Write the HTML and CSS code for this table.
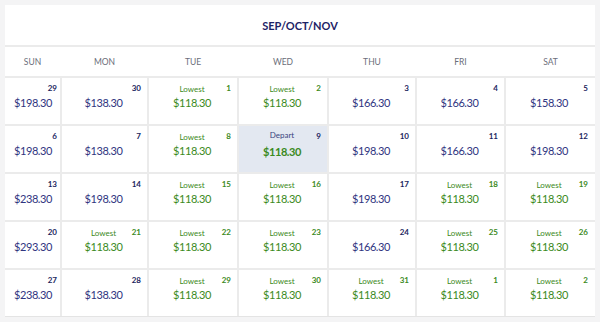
FILE: index.html
```html
<!DOCTYPE html>
<html>
<head>
<meta charset="utf-8">
<link rel="stylesheet" href="styles.css">
</head>
<body>
<div class="card">
  <div class="title">SEP/OCT/NOV</div>
  <div class="days">
    <div>SUN</div><div>MON</div><div>TUE</div><div>WED</div><div>THU</div><div>FRI</div><div>SAT</div>
  </div>
  <div class="cal">
    <div class="cell"><div class="top"><span class="d">29</span></div><div class="p">$198.30</div></div>
    <div class="cell"><div class="top"><span class="d">30</span></div><div class="p">$138.30</div></div>
    <div class="cell low"><div class="top"><span class="l">Lowest</span><span class="d">1</span></div><div class="p">$118.30</div></div>
    <div class="cell low"><div class="top"><span class="l">Lowest</span><span class="d">2</span></div><div class="p">$118.30</div></div>
    <div class="cell"><div class="top"><span class="d">3</span></div><div class="p">$166.30</div></div>
    <div class="cell"><div class="top"><span class="d">4</span></div><div class="p">$166.30</div></div>
    <div class="cell"><div class="top"><span class="d">5</span></div><div class="p">$158.30</div></div>

    <div class="cell"><div class="top"><span class="d">6</span></div><div class="p">$198.30</div></div>
    <div class="cell"><div class="top"><span class="d">7</span></div><div class="p">$138.30</div></div>
    <div class="cell low"><div class="top"><span class="l">Lowest</span><span class="d">8</span></div><div class="p">$118.30</div></div>
    <div class="cell sel"><div class="top"><span class="l">Depart</span><span class="d">9</span></div><div class="p">$118.30</div></div>
    <div class="cell"><div class="top"><span class="d">10</span></div><div class="p">$198.30</div></div>
    <div class="cell"><div class="top"><span class="d">11</span></div><div class="p">$166.30</div></div>
    <div class="cell"><div class="top"><span class="d">12</span></div><div class="p">$198.30</div></div>

    <div class="cell"><div class="top"><span class="d">13</span></div><div class="p">$238.30</div></div>
    <div class="cell"><div class="top"><span class="d">14</span></div><div class="p">$198.30</div></div>
    <div class="cell low"><div class="top"><span class="l">Lowest</span><span class="d">15</span></div><div class="p">$118.30</div></div>
    <div class="cell low"><div class="top"><span class="l">Lowest</span><span class="d">16</span></div><div class="p">$118.30</div></div>
    <div class="cell"><div class="top"><span class="d">17</span></div><div class="p">$198.30</div></div>
    <div class="cell low"><div class="top"><span class="l">Lowest</span><span class="d">18</span></div><div class="p">$118.30</div></div>
    <div class="cell low"><div class="top"><span class="l">Lowest</span><span class="d">19</span></div><div class="p">$118.30</div></div>

    <div class="cell"><div class="top"><span class="d">20</span></div><div class="p">$293.30</div></div>
    <div class="cell low"><div class="top"><span class="l">Lowest</span><span class="d">21</span></div><div class="p">$118.30</div></div>
    <div class="cell low"><div class="top"><span class="l">Lowest</span><span class="d">22</span></div><div class="p">$118.30</div></div>
    <div class="cell low"><div class="top"><span class="l">Lowest</span><span class="d">23</span></div><div class="p">$118.30</div></div>
    <div class="cell"><div class="top"><span class="d">24</span></div><div class="p">$166.30</div></div>
    <div class="cell low"><div class="top"><span class="l">Lowest</span><span class="d">25</span></div><div class="p">$118.30</div></div>
    <div class="cell low"><div class="top"><span class="l">Lowest</span><span class="d">26</span></div><div class="p">$118.30</div></div>

    <div class="cell"><div class="top"><span class="d">27</span></div><div class="p">$238.30</div></div>
    <div class="cell"><div class="top"><span class="d">28</span></div><div class="p">$138.30</div></div>
    <div class="cell low"><div class="top"><span class="l">Lowest</span><span class="d">29</span></div><div class="p">$118.30</div></div>
    <div class="cell low"><div class="top"><span class="l">Lowest</span><span class="d">30</span></div><div class="p">$118.30</div></div>
    <div class="cell low"><div class="top"><span class="l">Lowest</span><span class="d">31</span></div><div class="p">$118.30</div></div>
    <div class="cell low"><div class="top"><span class="l">Lowest</span><span class="d">1</span></div><div class="p">$118.30</div></div>
    <div class="cell low"><div class="top"><span class="l">Lowest</span><span class="d">2</span></div><div class="p">$118.30</div></div>
  </div>
</div>
</body>
</html>
```
FILE: styles.css
```css
html, body {
  margin: 0;
  padding: 0;
  background: #f4f4f5;
}
body {
  padding: 5px;
  font-family: "Lato", "Open Sans", sans-serif;
}
.card {
  width: 590px;
  background: #fff;
  box-sizing: border-box;
}
.title {
  height: 40px;
  border-bottom: 2px solid #ebebeb;
  display: flex;
  align-items: center;
  justify-content: center;
  font-weight: 700;
  font-size: 11px;
  color: #1d2366;
}
.days, .cal {
  display: grid;
  grid-template-columns: 55px 85px 88px 88px 86px 87px 1fr;
  column-gap: 2px;
}
.days {
  height: 29px;
  border-bottom: 2px solid #ebebeb;
  align-items: center;
  text-align: center;
  font-size: 8.5px;
  color: #6b6e7a;
}
.cal {
  row-gap: 2px;
  background: #ebebeb;
  border-bottom: 1px solid #e4e4e4;
}
.cell {
  background: #fff;
  height: 46px;
  box-sizing: border-box;
  padding: 4px 6px 0 4px;
}
.cell:nth-child(7n+1) {
  padding-right: 3px;
}
.cell:nth-child(7n) {
  padding-right: 7px;
}
.sel {
  background: #e3e8f1;
}
.top {
  display: grid;
  height: 12px;
  align-items: center;
}
.top > span {
  grid-area: 1 / 1;
}
.d {
  justify-self: end;
  font-weight: 700;
  font-size: 8px;
  color: #1b1f5e;
}
.l {
  justify-self: center;
  font-size: 8px;
  color: #3b8a22;
}
.sel .l {
  color: #3a4580;
  margin-top: -3px;
}
.p {
  text-align: center;
  font-size: 11px;
  color: #30357f;
  margin-top: 2px;
  letter-spacing: -0.4px;
}
.low .p, .sel .p {
  color: #3b8a22;
}
.sel .p {
  font-weight: 700;
  margin-top: 3px;
}
.low .d {
  color: #3b8a22;
}
.low .l {
  padding-top: 1px;
}
```
